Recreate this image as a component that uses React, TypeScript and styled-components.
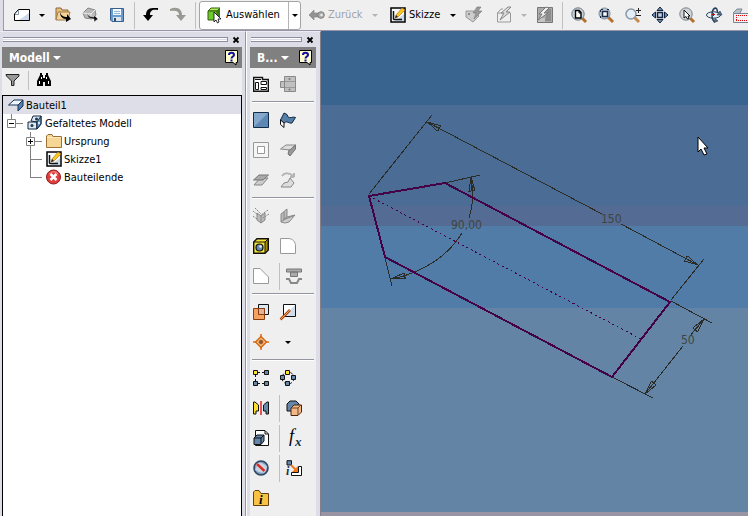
import React from 'react';
import styled, { createGlobalStyle, css } from 'styled-components';

const Global = createGlobalStyle`
  * { box-sizing: border-box; }
  body { margin: 0; font: 11px/18px "DejaVu Sans Condensed", Tahoma, "DejaVu Sans", sans-serif; color: #000; background: #dddde8; }
  button { font: inherit; color: inherit; background: none; border: 0; padding: 0; margin: 0; }
  ul { list-style: none; margin: 0; padding: 0; }
  svg { display: block; flex: none; overflow: visible; }
`;

const Page = styled.div`
  display: flex;
  flex-direction: column;
  height: 100vh;
  overflow: hidden;
`;
const Toolbar = styled.header`
  display: flex;
  align-items: center;
  flex: none;
  height: 31px;
  margin-left: 3px;
  padding-left: 4px;
  background: #efefef;
  border-left: 1px solid #9a9aae;
  border-bottom: 1px solid #9a94a8;
  overflow: hidden;
  & > * { flex: none; }
`;
const ToolButton = styled.button`
  display: flex;
  align-items: center;
  justify-content: center;
  width: 27px;
  height: 27px;
`;
const LabelButton = styled.button<{ $muted?: boolean }>`
  display: flex;
  align-items: center;
  gap: 3px;
  height: 27px;
  width: 64px;
  padding-left: ${p => (p.$muted ? 5 : 8)}px;
  color: ${p => (p.$muted ? '#a0a0ac' : '#000')};
`;
const DropButton = styled.button<{ $muted?: boolean }>`
  display: flex;
  align-items: center;
  justify-content: center;
  width: 14px;
  height: 27px;
  color: ${p => (p.$muted ? '#b4b4b4' : '#000')};
`;
const Caret = styled.span`
  width: 0;
  height: 0;
  border: 3px solid transparent;
  border-top-color: currentColor;
  border-bottom: 0;
`;
const WideCaret = styled(Caret)`
  border-width: 4px;
  border-bottom: 0;
`;
const Divider = styled.span`
  width: 5px;
  height: 27px;
  border-right: 1px solid #c0c0c0;
  margin-right: 2px;
`;
const Space = styled.span`
  width: 3px;
`;
const SplitButton = styled.div`
  display: flex;
  height: 29px;
  width: 102px;
  margin: 0 3px 0 1px;
  background: #fff;
  border: 1px solid #a4a4a4;
  border-radius: 3px;
  & > button:first-child {
    display: flex;
    align-items: center;
    gap: 3px;
    flex: 1;
    padding-left: 7px;
    border-right: 1px solid #b4b4b4;
  }
  & > button:last-child { width: 11px; }
`;

const Work = styled.main`
  display: flex;
  flex: 1;
  min-height: 0;
`;
const Panel = styled.section<{ $wide?: boolean }>`
  display: flex;
  flex-direction: column;
  flex: none;
  width: ${p => (p.$wide ? '246px' : '75px')};
  padding: 0 ${p => (p.$wide ? '3px 0 2px' : '4px 0 3px')};
  background: #dddde8;
  border-top: 1px solid #ececf4;
  border-right: 1px solid ${p => (p.$wide ? '#9494a6' : '#858088')};
  ${p => !p.$wide && css`border-left: 1px solid #fff;`}
`;
const Grip = styled.div`
  display: flex;
  align-items: center;
  gap: 3px;
  height: 15px;
  padding: 0 1px;
`;
const GripBars = styled.span`
  flex: 1;
  height: 5px;
  border: solid #8c8ca0;
  border-width: 1px 1px 1px 0;
  background: linear-gradient(#fff 1px, #dddde8 1px 2px, #fff 2px);
`;
const CloseButton = styled.button`
  display: flex;
  align-items: center;
  justify-content: center;
  width: 10px;
  height: 10px;
`;
const TitleBar = styled.div`
  display: flex;
  align-items: center;
  flex: none;
  height: 21px;
  padding: 0 2px 0 7px;
  background: #808080;
  color: #fff;
`;
const TitleMenu = styled.button`
  display: flex;
  align-items: center;
  flex: 1;
  gap: 3px;
  font-weight: bold;
  font-size: 12px;
  white-space: nowrap;
`;
const FilterBar = styled.div`
  display: flex;
  align-items: center;
  flex: none;
  height: 27px;
  padding: 0 3px 3px;
  gap: 7px;
  background: #efefef;
`;
const ShortLine = styled.span`
  width: 1px;
  height: 19px;
  background: #c0c0c0;
`;
const Tree = styled.ul`
  flex: 1;
  min-height: 0;
  background: #fff;
  border: 1px solid #000;
  border-bottom: 0;
`;
const TreeRow = styled.li<{ $indent: number; $active?: boolean }>`
  display: flex;
  align-items: center;
  height: 18px;
  padding-left: ${p => p.$indent}px;
  background: ${p => (p.$active ? '#dedee8' : 'transparent')};
  & > span { padding: 1px 0 0 2px; white-space: nowrap; }
`;
const Palette = styled.div`
  flex: 1;
  min-height: 0;
  overflow: hidden;
  padding-top: 1px;
  background: #efefef;
`;
const PaletteRow = styled.div`
  display: flex;
  align-items: center;
  height: 30px;
  padding-left: 3px;
`;
const PaletteButton = styled.button<{ $second?: boolean; $after?: boolean }>`
  display: flex;
  align-items: center;
  justify-content: center;
  width: 16px;
  height: 24px;
  margin-left: ${p => (p.$second ? 11 : p.$after ? 6 : 0)}px;
`;
const PaletteLine = styled.span`
  width: 1px;
  height: 27px;
  margin-left: 10px;
  background: #c0c0c0;
`;
const GroupLine = styled.hr`
  height: 2px;
  margin: 2px 2px;
  border: 0;
  border-top: 1px solid #9494a0;
  background: #fff;
`;
const Viewport = styled.section`
  position: relative;
  display: flex;
  flex-direction: column;
  flex: 1;
  min-width: 0;
  overflow: hidden;
  background: #9894a4;
`;
const Band = styled.div<{ $color: string; $h?: number }>`
  background: ${p => p.$color};
  ${p => (p.$h ? css`flex: none; height: ${p.$h}px;` : css`flex: 1; margin-bottom: 4px;`)}
`;
const Sketch = styled.svg`
  position: absolute;
  left: 0;
  top: 0;
  font: 12px "DejaVu Sans Condensed", Tahoma, sans-serif;
`;

const serif = '"Liberation Serif", serif';

const art: Record<string, React.ReactNode> = {
  blank: <><path d="M.5 13.500V7L4.500 2.500H15.500V13.500Z" fill="#fff" stroke="#000" /><path d="M5 13L15 6V13Z" fill="#ccd9ea" /><path d="M1 7.500H4.500V3" stroke="#8896a8" /></>,
  open: <><path d="M1 13V1H6L7 3H13V6" fill="#e8bd7c" stroke="#8d6738" /><path d="M1 13L3 5H15L13 13Z" fill="#f5d49b" stroke="#a37b48" /><path d="M5 5C6 9 9 10 12 10V7L16 12L11 15V12C7 12 5 9 5 5Z" fill="#000" /></>,
  server: <><path d="M1 6L6 1L13 3L14 8L10 12L3 11Z" fill="#b8b8b8" stroke="#888" /><path d="M1 6L9 7L13 3M9 7V11" stroke="#eee" /><path d="M5 6C6 9 9 10 12 10V8L16 12L12 15V12C7 12 5 9 5 6Z" fill="#111" stroke="#eee" strokeWidth=".5" /></>,
  save: <><path d="M1.500 1.500H14.500V14.500H3L1.500 13Z" fill="#6a9cce" stroke="#395f8d" /><rect x="4" y="2" width="8" height="6" fill="#f5faff" /><path d="M5 4.500H11M5 6.500H11" stroke="#91b9dc" /><rect x="4" y="10" width="8" height="4" fill="#dce6ee" /><rect x="5" y="11" width="2" height="3" fill="#32485d" /></>,
  undo: <path d="M15 1H10C5 1 3 4 3 8H0L5 14L10 8H7C7 4 9 2 15 3Z" fill="#000" />,
  redo: <path d="M0 2C7-1 12 2 12 8H16L11 14L6 8H9C9 4 6 3 0 4Z" fill="#999994" />,
  select: <><path d="M1 4L4 1H13L10 4Z" fill="#b2ef59" stroke="#315f0d" /><path d="M1 4H10V13H1Z" fill="#6ccb29" stroke="#315f0d" /><path d="M10 4L13 1V10L10 13Z" fill="#397a17" /><path d="M7 5V15L9 13L10.500 16L12 15L11 12H14Z" fill="#fff" stroke="#000" strokeWidth=".8" /></>,
  back: <><path d="M0 8L5 3V6H10V10H5V13Z" fill="#929292" stroke="#808080" strokeWidth=".6" /><circle cx="12" cy="8" r="3.300" fill="#aaa" stroke="#808080" /><circle cx="12.500" cy="8" r="1.200" fill="#eee" /></>,
  sketch: <><rect x="1" y="1" width="14" height="14" fill="#f8fafc" stroke="#000" strokeWidth="1.500" /><path d="M5 14L14 7V14Z" fill="#c7d7e6" /><path d="M3.500 4V12L4 12.500H12" stroke="#111" strokeWidth="1.500" /><path d="M5 11L6 8L12 1L15 3L8 10Z" fill="#f8c820" stroke="#b46b18" strokeWidth=".6" /><path d="M5 11L6 8L8 10Z" fill="#222" /></>,
  tagbolt: <><path d="M0 4H8L13 9L7 15L0 10Z" fill="#ccc" stroke="#999" /><circle cx="3" cy="7" r="1" fill="#777" /><path d="M11 0L7 6H10L8 12L16 4H12L15 0Z" fill="#999" stroke="#777" strokeWidth=".6" /></>,
  boxbolt: <><path d="M1.500 15V6L5 2H7M11 5L14.500 6V15H1.500M1 6H8" stroke="#999" /><path d="M12 0L5 6H8L4 13L14 5H10L15 0Z" fill="#ddd" stroke="#888" /></>,
  imagebolt: <><path d="M.500 .500H15.500V15.500H.500Z" fill="#aaa" stroke="#777" /><path d="M10 2H14V14H8Z" fill="#8c8c8c" /><path d="M1 11H8V15H1Z" fill="#c4c4c4" /><path d="M9 0L2 7H5L1 13L11 6H7L12 1Z" fill="#eee" stroke="#777" /></>,
  zoompage: <><path d="M11 11L15 15" stroke="#b56f28" strokeWidth="3" /><circle cx="7" cy="7" r="6.200" fill="#c8d2da" stroke="#707a84" /><path d="M4.500 3.500H8L10 5.500V11H4.500Z" fill="#fff" stroke="#000" strokeWidth="1.400" /><path d="M8 3V6H10" stroke="#000" /></>,
  zoombox: <><path d="M10 10L15 15" stroke="#b56f28" strokeWidth="3" /><circle cx="6.500" cy="6.500" r="5.500" fill="#b8c8d6" stroke="#7c8a98" /><path d="M4.500 4.500H9.500V9.500H4.500Z" fill="#fff" stroke="#1c2c48" strokeWidth="1.500" /><path d="M3 2.500H5M9 2.500H11M2.500 3V5M2.500 9V11" stroke="#1c2c48" /></>,
  zoompm: <><path d="M9 10L14 15" stroke="#c88b4a" strokeWidth="3" /><circle cx="6" cy="7" r="5" fill="#e4eef5" stroke="#8a97a4" strokeWidth="1.500" /><path d="M11 3.500H16M13.500 1V6M11 8.500H16" stroke="#222" /></>,
  pan: <><path d="M8 0L11 3.500H5ZM8 16L11 12.500H5ZM0 8L3.500 5V11ZM16 8L12.500 5V11Z" fill="#6f8db4" stroke="#14243e" /><path d="M5.500 5.500H10.500V10.500H5.500Z" fill="#c3d3e6" stroke="#14243e" strokeWidth="1.500" /></>,
  zoomsel: <><path d="M11 11L15 15" stroke="#b56f28" strokeWidth="3" /><circle cx="7" cy="7" r="6.200" fill="#d0d5da" stroke="#7a8188" /><path d="M5 3V11L7 9.500L8.500 12L10 11.500L9 9H11Z" fill="#fff" stroke="#000" strokeWidth=".9" /></>,
  orbit: <><ellipse cx="7.500" cy="8" rx="7" ry="3.200" fill="#e8f0f5" stroke="#263f5d" /><path d="M9 15C5 13 5 3 9 1C11 1 11.500 3 11.500 6" stroke="#263f5d" strokeWidth="1.500" /><path d="M8 15.500L12 14L9 11.500ZM11 8L16 8L14 4Z" fill="#53708e" stroke="#23384e" strokeWidth=".6" /><path d="M6 7.500H9M7.500 6V9" stroke="#e00000" /></>,
  lookat: <><path d="M0 6L4 2H9L7 6" fill="#b5c2cc" stroke="#7d8994" /><path d="M.500 6.500H18V15.500H.500Z" fill="#f4f0f4" stroke="#778494" /><path d="M3 8.500H17M3 13.500H17M3.500 8V14" stroke="#e00000" strokeDasharray="1 1" /></>,
  help: <><path d="M1.500 .500H13.500V12.500H12V15L9 12.500H1.500Z" fill="#fffcd0" stroke="#000" /><path d="M5 5C5 2 10 2 10 5C10 6.500 7.500 6.500 7.500 8.500M7.500 9.500V11.500" stroke="#10109a" strokeWidth="2" /></>,
  close: <path d="M5.500 5.500L10.500 10.500M10.500 5.500L5.500 10.500" stroke="#000" strokeWidth="1.800" />,
  filter: <path d="M1 2.500H14V4L9 9V13.500H6.500V9L1.500 4Z" fill="#999" stroke="#222" />,
  find: <><path d="M1 14V9L4 3H7V14ZM9 14V3H12L15 9V14Z" fill="#000" /><path d="M4 1H6V4H4ZM10 1H12V4H10ZM6 6H10V10H6Z" fill="#000" /><path d="M3.500 9V12M12.500 9V12M5.500 5V7M10.500 5V7" stroke="#fff" /></>,
  part: <><path d="M.500 8L6 3H15L10 8Z" fill="#eef6ff" stroke="#17324e" /><path d="M10 8L15 3V9L10 14Z" fill="#527eaf" stroke="#17324e" /></>,
  folded: <><path d="M1 7H10V14H1ZM4 6L6 1H14V9L10 14V7Z" fill="#dbe9f5" stroke="#15283c" /><path d="M10 7L14 1V9L10 14Z" fill="#6a9ac8" stroke="#15283c" /><circle cx="5" cy="10.500" r="1.500" fill="#234" /><circle cx="9.500" cy="4" r="1.500" fill="#234" /><circle cx="12" cy="8" r="1" fill="#fff" /></>,
  folder: <><path d="M.500 14.500V3L2 1.500H6L7 3.500H15.500V14.500Z" fill="#f5d695" stroke="#9b7234" /><path d="M1 4.500H15" stroke="#ffe9ba" /></>,
  end: <><circle cx="7.500" cy="8" r="7" fill="#e23c3c" stroke="#8b1d1d" /><path d="M3.500 5C5.500 2 10 2 12 5" stroke="#ff9c9c" /><path d="M4.500 5L10.500 11M10.500 5L4.500 11" stroke="#fff" strokeWidth="2.500" /></>,
  styles: <><path d="M.700 1.500H9.500V3.500H15.300V15.300H.700Z" fill="#fff" stroke="#111" strokeWidth="1.400" /><path d="M2.500 6.500H5.500V13.500H2.500ZM8 5.500H13.500V8.500H8ZM8 11.500H13.500V13.500H8ZM2 3.500H8" stroke="#111" /></>,
  flat: <><path d="M4.500 .500H15.500V15.500H4.500ZM.500 5.500H4.500V11.500H.500Z" fill="#c0c0c0" stroke="#888" /><path d="M5 5.500H15M5 11.500H15" stroke="#999" /><circle cx="9.500" cy="3" r="1" fill="#777" /><circle cx="9.500" cy="13.500" r="1" fill="#777" /></>,
  face: <><path d="M.500 .500H15.500V15.500H.500Z" fill="#5f87b3" stroke="#122b46" /><path d="M1 15V1H15Z" fill="#83a8cc" /></>,
  contour: <><path d="M.500 8L4 1L7 2.500L8 5C10 7 13 4 15.500 5.500L12 11C9 12 7 8 4 11Z" fill="#567fa8" stroke="#102941" /><path d="M.500 8L4 11V15.500L.500 12.500Z" fill="#fff" stroke="#111" /></>,
  cut: <><path d="M.500 .500H15.500V15.500H.500Z" fill="#f5f5f5" stroke="#999" /><path d="M4.500 4.500H11.500V11.500H4.500Z" fill="#fff" stroke="#999" /></>,
  flange: <><path d="M.500 7L6 3H15.500L10 8Z" fill="#ddd" stroke="#888" /><path d="M10 8L15.500 3V7L10 14L8 12L9 8Z" fill="#999" stroke="#777" /></>,
  bend: <><path d="M1 13L7 6H15L9 13Z" fill="#ccc" stroke="#888" /><path d="M.500 8L6 3H15.500L10 8Z" fill="#aaa" stroke="#777" /></>,
  rotate: <><path d="M2 4C5 0 10 1 13 4M14 5V1M14 5H10" stroke="#b4b4b4" strokeWidth="2" /><path d="M1 15L4 11L8 10L10 6L14 11L11 15H1Z" fill="#ddd" stroke="#888" /></>,
  seam: <><path d="M4 5L8 8V15L4 12ZM8 8L12 5V12L8 15" fill="#bbb" stroke="#888" /><path d="M0 3L5 7M2 0L8 6M15 2L8 7M16 6L10 10M0 8L4 11" stroke="#888" strokeDasharray="2 1" /></>,
  corner: <><path d="M1 6L7 1V9L1 14Z" fill="#bbb" stroke="#888" /><path d="M1 14L7 9L15 7L9 14L5 15Z" fill="#ccc" stroke="#888" /><path d="M3 12L13 8M4 4V12" stroke="#888" /></>,
  hole: <><path d="M.700 4L4 .700H15.300V12L12 15.300H.700Z" fill="#f6e332" stroke="#111" strokeWidth="1.400" /><path d="M12 4L15 1V12L12 15Z" fill="#a48d09" stroke="#111" /><path d="M1 4H12" stroke="#111" /><circle cx="6.500" cy="9.500" r="3.500" fill="#668ab0" stroke="#111" strokeWidth="1.200" /><circle cx="7.500" cy="8.500" r="1.300" fill="#eaf3fb" /></>,
  round: <path d="M.500 .500H8C13 .500 15.500 4 15.500 8V15.500H.500Z" fill="#fff" stroke="#999" />,
  chamfer: <path d="M.500 .500H7L15.500 9V15.500H.500Z" fill="#fff" stroke="#999" />,
  punch: <><path d="M.500 1H15.500V4H.500ZM4.500 4H11.500V8.500H4.500Z" fill="#aaa" stroke="#777" /><path d="M0 11H3L5 15H11L13 11H16" stroke="#888" strokeWidth="2" /></>,
  planes: <><path d="M5.500 .500H15.500V10.500H5.500Z" fill="#dce7f5" stroke="#111" /><path d="M.500 4.500H11.500V15.500H.500Z" fill="#f3a35e" stroke="#8b3b10" /><path d="M5.500 10.500V4.500H11.500V10.500Z" fill="#e0b49a" stroke="#8b3b10" /></>,
  axis: <><path d="M3.500 .500H15.500V12.500H3.500Z" fill="#fff" stroke="#111" /><path d="M4 12L15 1V12Z" fill="#cfdded" /><path d="M.500 15.500L10 6" stroke="#a54812" strokeWidth="2.500" /><path d="M.500 15.500L10 6" stroke="#ff9b45" /></>,
  point: <><path d="M8 0V16M0 8H16" stroke="#e36d18" strokeWidth="1.500" /><path d="M8 2.500L13.500 8L8 13.500L2.500 8Z" fill="#f8b878" stroke="#d0660f" strokeWidth="1.300" /><circle cx="8" cy="8" r="1.800" fill="#fff" stroke="#984111" /><path d="M8 7V9M7 8H9" stroke="#5a2608" /></>,
  rectpat: <><path d="M5 2.500H11M2.500 5V11M5 13.500H11" stroke="#111" strokeDasharray="2 2" /><path d="M.500 .500H4.500V4.500H.500Z" fill="#ffe22d" stroke="#111" /><path d="M11.500 .500H15.500V4.500H11.500ZM.500 11.500H4.500V15.500H.500ZM11.500 11.500H15.500V15.500H11.500Z" fill="#6688ab" stroke="#111" /></>,
  circpat: <><circle cx="8" cy="8" r="6" stroke="#111" strokeDasharray="3 2" /><path d="M5.500 .500H9.500V4.500H5.500Z" fill="#ffe22d" stroke="#111" /><path d="M.500 5.500H4.500V9.500H.500ZM11.500 5.500H15.500V9.500H11.500ZM5.500 11.500H9.500V15.500H5.500Z" fill="#6688ab" stroke="#111" /></>,
  mirror: <><path d="M.500 2H2L5.500 5V11H3V14H.500Z" fill="#f9dc2e" stroke="#111" /><path d="M15.500 2H14L10.500 5V11H13V14H15.500Z" fill="#6688ab" stroke="#111" /><path d="M8 1V15" stroke="#e00000" strokeWidth="1.300" /></>,
  derive: <><path d="M1 4L4 1H10L13 4V11H1Z" fill="#6386aa" stroke="#111" /><path d="M5 8L8 5H15.500V12L12 15.500H5Z" fill="#f2b888" stroke="#472611" /><path d="M5 8H12L15 5M12 8V15" stroke="#754320" /></>,
  copy: <><path d="M2.500 .500H12L15.500 4V15.500H2.500Z" fill="#fff" stroke="#111" /><path d="M12 1V4H15" stroke="#111" /><path d="M1 8L4 5H11V11L8 14.500H1Z" fill="#6386aa" stroke="#111" /><path d="M1 8H8L11 5M8 8V14" stroke="#111" /></>,
  measure: <><circle cx="8" cy="8" r="7" fill="#7f9cba" stroke="#2c4864" strokeWidth="1.600" /><path d="M2 10C5 12 9 14 12 12L14 7C12 4 8 2 5 3Z" fill="#c4d4e4" /><path d="M4 4L12 11" stroke="#f4d8d8" strokeWidth="3.500" /><path d="M4 4L11.500 11" stroke="#d32e28" strokeWidth="2.500" /></>,
  imate: <><path d="M1 .700H5.500V5H1Z" fill="#6688ab" stroke="#111" /><path d="M12.500 6.500H15.500V15.500H5.500V12.500H12.500Z" fill="#fff" stroke="#111" /><path d="M5 5L10 10" stroke="#ef781d" strokeWidth="2" /><path d="M12 6V12H6Z" fill="#ef781d" /><text x="0" y="15" fontSize="12" fontStyle="italic" fontWeight="bold" fontFamily={serif} fill="#16304a">i</text></>,
  info: <><path d="M.500 15.500V2L2 .500H6L8 3.500H15.500V15.500Z" fill="#f8c342" stroke="#64420d" /><text x="6" y="14" fontSize="13" fontStyle="italic" fontWeight="bold" fontFamily={serif} fill="#000">i</text></>,
  fx: <><text x="3" y="12" fontSize="18" fontStyle="italic" fontFamily={serif} fill="#000">f</text><text x="9" y="16" fontSize="13" fontStyle="italic" fontWeight="bold" fontFamily={serif} fill="#16304a">x</text></>,
};

function Icon({ name }: { name: string }) {
  return (
    <svg width="16" height="16" viewBox="0 0 16 16" fill="none" aria-hidden="true">
      {art[name]}
    </svg>
  );
}

const Tool = ({ icon, label }: { icon: string; label: string }) => (
  <ToolButton aria-label={label}><Icon name={icon} /></ToolButton>
);
const Drop = ({ muted, label }: { muted?: boolean; label: string }) => (
  <DropButton $muted={muted} aria-label={label}><Caret /></DropButton>
);

type Joint = 'minus' | 'plus' | 'mid' | 'last';
function Guide({ joint }: { joint: Joint }) {
  const box = joint === 'minus' || joint === 'plus';
  return (
    <svg width="22" height="18" fill="none" stroke="#808080" aria-hidden="true">
      <path d={`M6.500 0V${joint === 'last' || joint === 'minus' ? 9 : 18}M6 9.500H18`} />
      {box && <><path d="M2.500 5.500H10.500V13.500H2.500Z" fill="#fff" /><path d={`M4 9.500H9${joint === 'plus' ? 'M6.500 7V12' : ''}`} stroke="#000" /></>}
    </svg>
  );
}

const nodes: { text: string; icon: string; indent: number; joint?: Joint }[] = [
  { text: 'Bauteil1', icon: 'part', indent: 5 },
  { text: 'Gefaltetes Modell', icon: 'folded', indent: 2, joint: 'minus' },
  { text: 'Ursprung', icon: 'folder', indent: 21, joint: 'plus' },
  { text: 'Skizze1', icon: 'sketch', indent: 21, joint: 'mid' },
  { text: 'Bauteilende', icon: 'end', indent: 21, joint: 'last' },
];

type PaletteItem = { a: string; b?: string; line?: boolean; drop?: boolean };
const groups: PaletteItem[][] = [
  [{ a: 'styles', b: 'flat' }],
  [{ a: 'face', b: 'contour' }, { a: 'cut', b: 'flange' }, { a: 'bend', b: 'rotate' }],
  [{ a: 'seam', b: 'corner' }, { a: 'hole', b: 'round' }, { a: 'chamfer', b: 'punch', line: true }],
  [{ a: 'planes', b: 'axis' }, { a: 'point', drop: true }],
  [{ a: 'rectpat', b: 'circpat' }, { a: 'mirror', b: 'derive', line: true }, { a: 'copy', b: 'fx', line: true }, { a: 'measure', b: 'imate', line: true }, { a: 'info' }],
];

function PanelHead({ title }: { title: string }) {
  return (
    <>
      <Grip><GripBars /><CloseButton aria-label="Schließen"><Icon name="close" /></CloseButton></Grip>
      <TitleBar>
        <TitleMenu>{title}<WideCaret /></TitleMenu>
        <button aria-label="Hilfe"><Icon name="help" /></button>
      </TitleBar>
    </>
  );
}

function Arrow({ x, y, angle }: { x: number; y: number; angle: number }) {
  return <path transform={`translate(${x} ${y}) rotate(${angle})`} d="M0 0L14-3V3ZM0 0H14" />;
}

function Drawing() {
  return (
    <Sketch width="427" height="485" viewBox="321 31 427 485" fill="none" role="img" aria-label="Skizze mit Bemaßung">
      <g stroke="#2b2b28" strokeWidth="1" shapeRendering="crispEdges">
        <path d="M369 194L432 115M427 122L602 214M621 224L698 265M671 300L704 259" />
        <path d="M671 301L712 323M612 377L653 398M703 320L690 336M683 346L645 394" />
        <path d="M445 183L480 175M385 258L392 286M471 178Q475 200 469 218M462 233C450 253 425 273 391 279" />
        <Arrow x={427} y={122} angle={28} />
        <Arrow x={698} y={265} angle={208} />
        <Arrow x={704} y={319} angle={129} />
        <Arrow x={645} y={394} angle={-51} />
        <Arrow x={471} y={177} angle={86} />
        <Arrow x={391} y={279} angle={-13} />
      </g>
      <g stroke="#460046" shapeRendering="crispEdges">
        <path d="M369 196L445 183L670 302L612 377L385 257Z" strokeWidth="2" />
        <path d="M369 196L641 339" strokeDasharray="2 3" />
      </g>
      <g fill="#40443e">
        <text x="451" y="229">90,00</text>
        <text x="601" y="223">150</text>
        <text x="681" y="344">50</text>
      </g>
      <path d="M698 137V152L701 149L704 155L707 154L704 148H708Z" fill="#fff" stroke="#000" />
    </Sketch>
  );
}

export default function App() {
  return (
    <Page>
      <Global />
      <Toolbar>
        <Tool icon="blank" label="Neu" /><Drop label="Neu Optionen" />
        <Tool icon="open" label="Öffnen" /><Tool icon="server" label="Projekt öffnen" /><Tool icon="save" label="Speichern" />
        <Divider />
        <Tool icon="undo" label="Rückgängig" /><Tool icon="redo" label="Wiederherstellen" />
        <Divider />
        <SplitButton>
          <button><Icon name="select" />Auswählen</button>
          <DropButton aria-label="Auswahloptionen"><Caret /></DropButton>
        </SplitButton>
        <LabelButton $muted><Icon name="back" />Zurück</LabelButton><Drop muted label="Zurück Optionen" />
        <LabelButton><Icon name="sketch" />Skizze</LabelButton><Drop label="Skizze Optionen" />
        <Tool icon="tagbolt" label="Aktualisieren" />
        <Space />
        <Tool icon="boxbolt" label="Bauteil aktualisieren" /><Drop muted label="Aktualisierungsoptionen" />
        <Tool icon="imagebolt" label="Alles aktualisieren" />
        <Divider />
        <Tool icon="zoompage" label="Alles zoomen" /><Tool icon="zoombox" label="Fenster zoomen" /><Tool icon="zoompm" label="Zoom" />
        <Tool icon="pan" label="Pan" /><Tool icon="zoomsel" label="Auswahl zoomen" /><Tool icon="orbit" label="Drehen" />
        <Tool icon="lookat" label="Ausrichten nach" />
      </Toolbar>
      <Work>
        <Panel $wide>
          <PanelHead title="Modell" />
          <FilterBar>
            <button aria-label="Filter"><Icon name="filter" /></button>
            <ShortLine />
            <button aria-label="Suchen"><Icon name="find" /></button>
          </FilterBar>
          <Tree>
            {nodes.map((n, i) => (
              <TreeRow key={n.text} $indent={n.indent} $active={i === 0}>
                {n.joint && <Guide joint={n.joint} />}
                <Icon name={n.icon} />
                <span>{n.text}</span>
              </TreeRow>
            ))}
          </Tree>
        </Panel>
        <Panel>
          <PanelHead title="B..." />
          <Palette>
            {groups.map((g, gi) => (
              <React.Fragment key={gi}>
                {gi > 0 && <GroupLine />}
                {g.map(r => (
                  <PaletteRow key={r.a}>
                    <PaletteButton aria-label={r.a}><Icon name={r.a} /></PaletteButton>
                    {r.line && <PaletteLine />}
                    {r.b && <PaletteButton aria-label={r.b} $second={!r.line} $after={r.line}><Icon name={r.b} /></PaletteButton>}
                    {r.drop && <PaletteButton aria-label="Mehr" $second><Caret /></PaletteButton>}
                  </PaletteRow>
                ))}
              </React.Fragment>
            ))}
          </Palette>
        </Panel>
        <Viewport>
          <Band $color="#3a6490" $h={74} />
          <Band $color="#4b6c95" $h={101} />
          <Band $color="#546b93" $h={20} />
          <Band $color="#527ca8" $h={82} />
          <Band $color="#6484a6" />
          <Drawing />
        </Viewport>
      </Work>
    </Page>
  );
}
